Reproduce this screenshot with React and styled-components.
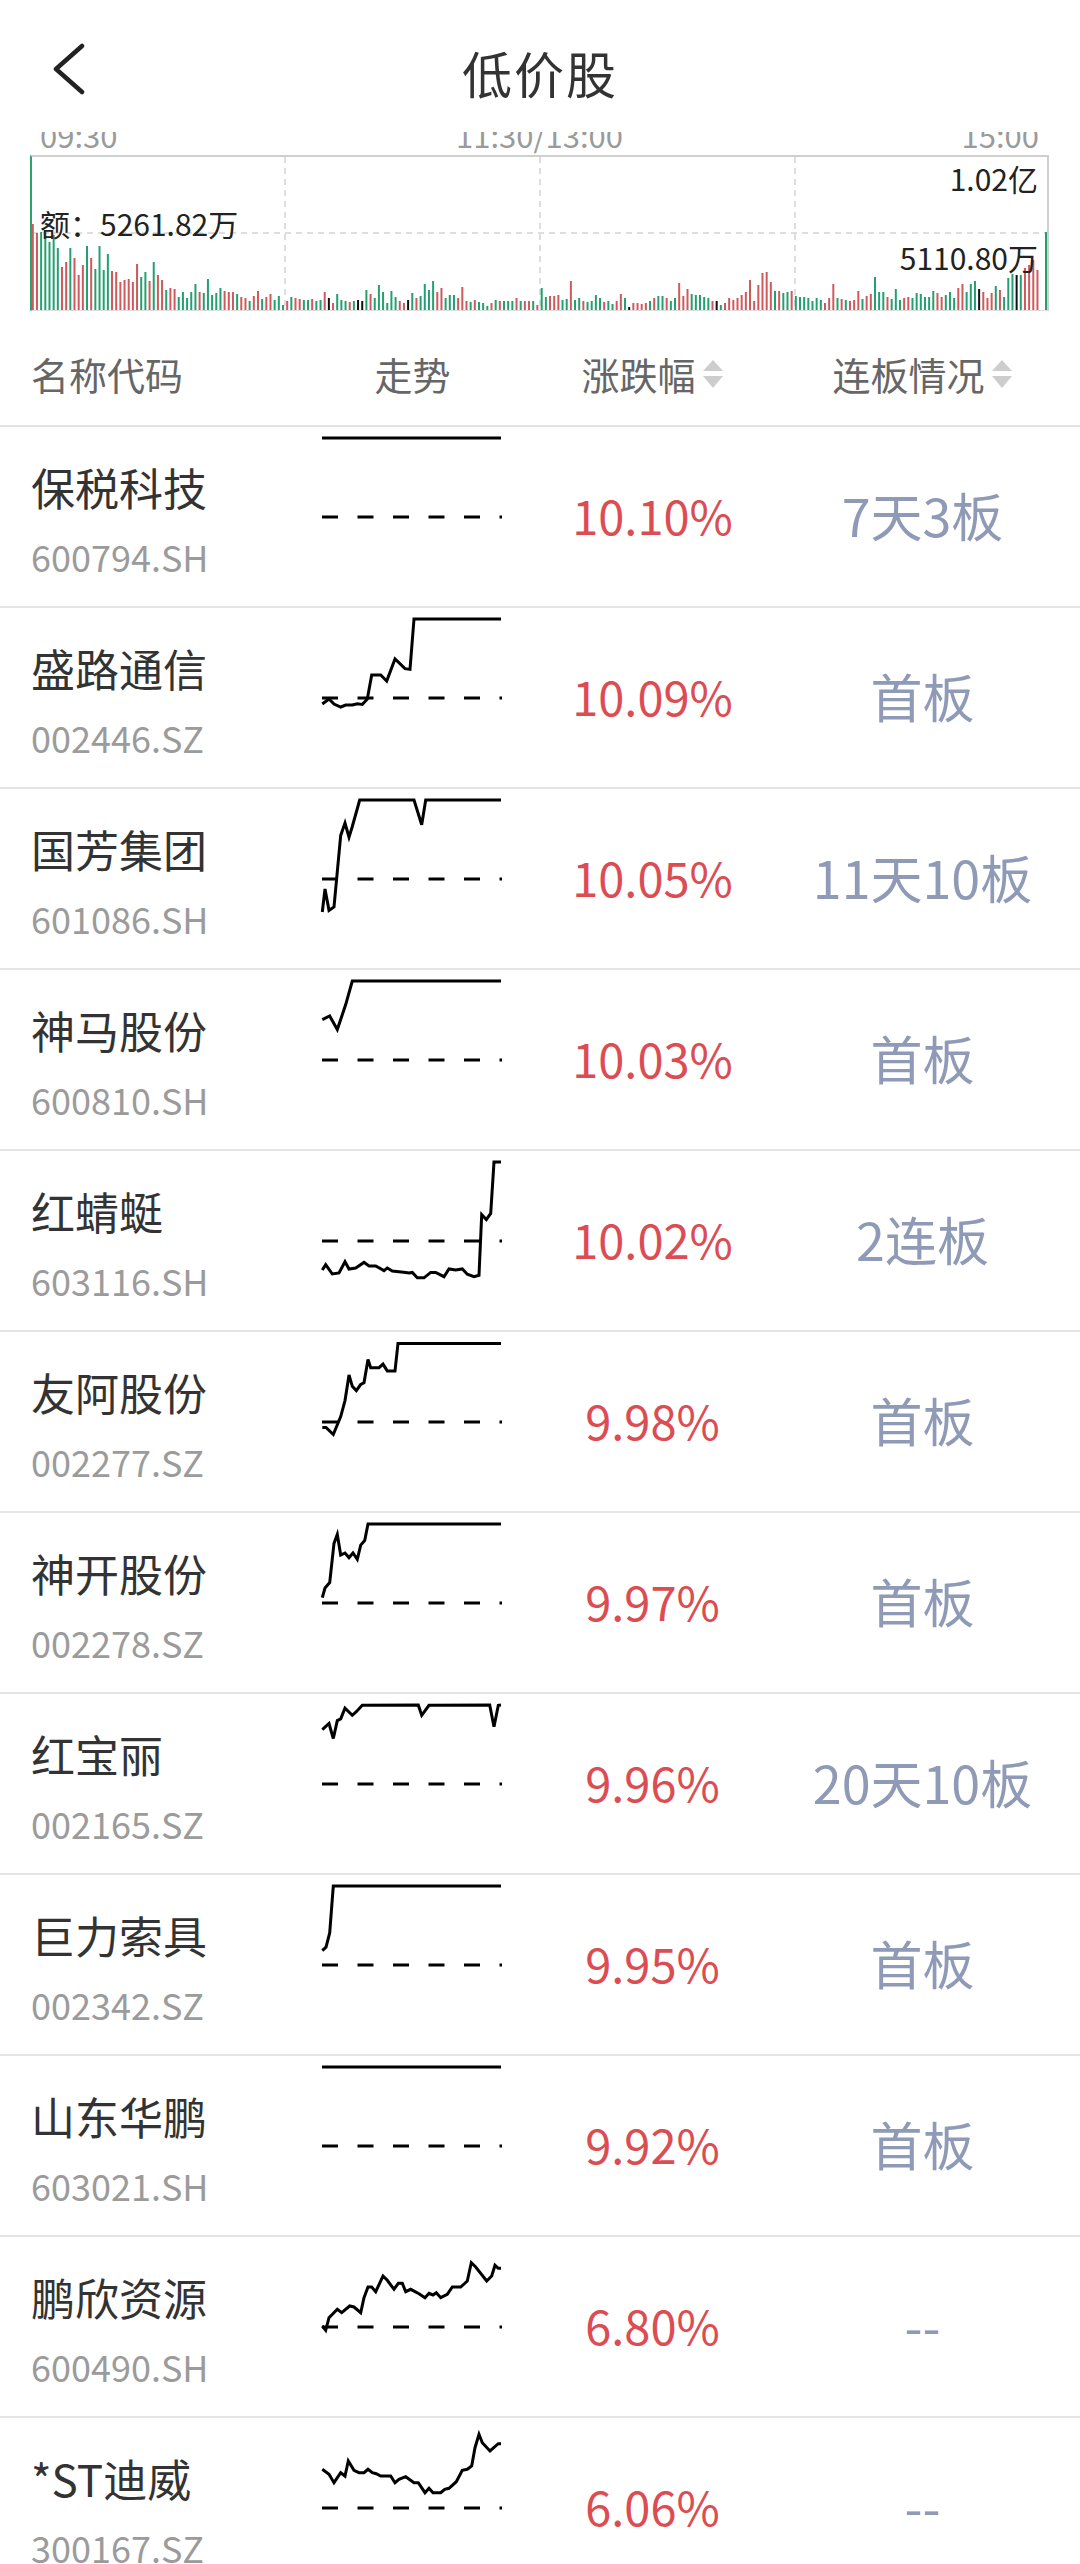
import React from "react";
import styled, { createGlobalStyle } from "styled-components";

const RED = "#db4d53";
const BOARD = "#8e9ab6";
const BAR_RED = "#d0595c";
const BAR_GREEN = "#23a070";

const GlobalStyle = createGlobalStyle`
  html, body { margin: 0; padding: 0; background: #fff; }
  body { font-family: "Noto Sans CJK SC", "Noto Sans", sans-serif; color: #222; }
  * { box-sizing: border-box; }
`;

const Page = styled.div`
  width: 1080px;
  height: 2564px;
  overflow: hidden;
  background: #fff;
`;

const Header = styled.header`
  height: 132px;
  display: grid;
  grid-template-columns: 1fr auto 1fr;
  align-items: start;
  background: #fff;
`;

const BackButton = styled.button`
  justify-self: start;
  margin: 43px 0 0 52px;
  padding: 0;
  border: none;
  background: none;
  width: 34px;
  height: 52px;
  display: flex;
`;

const Title = styled.h1`
  margin: 43px 0 0;
  font-size: 50px;
  line-height: 58px;
  font-weight: 400;
  color: #333;
  letter-spacing: 2px;
`;

const ChartSection = styled.section`
  height: 179px;
  overflow: hidden;
  padding: 0 31px 0 30px;
  display: flex;
  flex-direction: column;
`;

const TimeRow = styled.div`
  height: 23px;
  flex: none;
  display: flex;
  align-items: flex-end;
  justify-content: space-between;
  padding: 0 10px;
`;

const TimeLabel = styled.span`
  font-size: 31px;
  line-height: 31px;
  color: #9a9a9a;
  margin-bottom: 5px;
`;

const Plot = styled.div`
  position: relative;
  height: 156px;
  flex: none;
  border-top: 2px solid #cfcfcf;
  border-left: 2px solid #2aa073;
  border-right: 2px solid #cfcfcf;
  border-bottom: 1px solid #dedede;
`;

const PlotSvg = styled.svg`
  display: block;
  width: 1015px;
  height: 153px;
`;

const PlotLabel = styled.span`
  position: absolute;
  font-size: 30px;
  line-height: 30px;
  color: #222;
  white-space: nowrap;
  ${(p) => (p.$left != null ? `left: ${p.$left}px;` : `right: ${p.$right}px;`)}
  top: ${(p) => p.$top}px;
`;

const cols = "300px 225px 255px 1fr";

const TableHead = styled.div`
  height: 116px;
  display: grid;
  grid-template-columns: ${cols};
  padding: 12px 15px 0 0;
  align-items: center;
  border-bottom: 2px solid #e2e2e2;
`;

const HeadCell = styled.div`
  font-size: 38px;
  line-height: 44px;
  color: #666;
  display: flex;
  align-items: center;
  justify-content: ${(p) => (p.$start ? "flex-start" : "center")};
  padding-left: ${(p) => (p.$start ? "31px" : "0")};
  gap: 6px;
`;

const Row = styled.div`
  height: 181px;
  display: grid;
  grid-template-columns: ${cols};
  padding-right: 15px;
  border-bottom: 2px solid #e4e4e4;
`;

const NameCell = styled.div`
  padding: 34px 0 0 31px;
  display: flex;
  flex-direction: column;
`;

const Name = styled.div`
  font-size: 44px;
  line-height: 52px;
  color: #333;
  white-space: nowrap;
`;

const Code = styled.div`
  margin-top: 23px;
  font-size: 36px;
  line-height: 40px;
  color: #9b9b9b;
`;

const TrendSvg = styled.svg`
  display: block;
  justify-self: center;
  align-self: start;
  margin-top: 10px;
  width: 181px;
  height: 160px;
  overflow: visible;
`;

const Pct = styled.div`
  justify-self: center;
  align-self: center;
  font-size: 47px;
  line-height: 50px;
  color: ${RED};
  padding-bottom: 4px;
`;

const Board = styled.div`
  justify-self: center;
  align-self: center;
  font-size: 52px;
  line-height: 56px;
  color: ${BOARD};
  padding-bottom: 4px;
  white-space: nowrap;
`;

const SortIcon = () => (
  <svg width="22" height="30" viewBox="0 0 22 30">
    <polygon points="1,12 11,1 21,12" fill="#cdcdcd" />
    <polygon points="1,17 11,29 21,17" fill="#cdcdcd" />
  </svg>
);

const BackIcon = () => (
  <svg width="34" height="52" viewBox="0 0 34 52">
    <polyline
      points="30,3 4,26 30,49"
      fill="none"
      stroke="#222"
      strokeWidth="4.5"
      strokeLinecap="round"
      strokeLinejoin="round"
    />
  </svg>
);

const half1 =
  "86r 77r 78g 80g 68g 75g 62g 43r 48r 62g 52r 35r 45r 64g 52r 41g 64g 40g 56g 39r 38r 28r 30r 31r 28r 46r 33g 38g 29r 48g 35r 30r 20g 22r 21r 13g 18g 12g 18g 26g 18r 17g 31g 15g 17g 22g 19r 18r 18r 16g 13r 12r 9g 14r 19r 11g 13r 16r 10g 14g 5g 9r 13g 12r 11r 10g 10g 11r 9g 10g 18r 12k 7r 16g 10g 9g 8r 9g 10k 9k 20g 16r 12g 25g 18g 7g 19g 13g 9r 7r 10k 17g 12r 14g 26g 20g 29g 18r 22r 12g 15g 15g 12r 23r 9r 8g 10r 8g 7g 4g 7r 10g 9r 9g 9g 9g 12r 9g 9r 9r 9g 5r";
const half2 =
  "22g 13g 14r 14r 15r 10g 11g 29r 10g 12g 9r 8g 9g 15g 12g 8r 9g 6g 9r 16r 12g 3k 7r 7r 6r 7r 9g 12r 14g 14g 12r 9g 12g 27r 14r 21r 16g 15g 15g 13g 12g 9r 9k 5g 7r 12r 10r 12r 15r 18r 30r 9r 25r 37r 38r 28r 19g 19r 17g 18g 19r 14g 13g 13g 12g 9g 12g 10g 7r 12r 26r 12g 11r 10g 9r 10r 19r 11g 14r 16r 33g 18g 18g 13r 11g 21g 10g 12r 13r 12g 17g 16g 13g 13g 19g 17r 13r 15g 18g 12g 22r 26r 18g 26g 29g 21k 18r 12r 17r 24g 20r 13g 32g 36g 35k 35g 42r 45r 50r 40r";

const colorOf = (c) => (c === "r" ? BAR_RED : c === "g" ? BAR_GREEN : "#111");

const parse = (s, x0, step) =>
  s.split(" ").map((t, i) => ({
    x: x0 + i * step,
    h: parseInt(t, 10),
    c: colorOf(t.slice(-1)),
  }));

const bars = [
  ...parse(half1, 32.8 - 32, 4.17),
  ...parse(half2, 541.7 - 32, 4.166),
  { x: 1014, h: 78, c: BAR_GREEN },
];

const VolumeChart = () => (
  <Plot>
    <PlotSvg viewBox="0 0 1015 153">
      {[253, 508, 763].map((x) => (
        <line key={x} x1={x} y1="0" x2={x} y2="153" stroke="#d4d4d4" strokeWidth="1.5" strokeDasharray="6 5" />
      ))}
      <line x1="0" y1="76" x2="1015" y2="76" stroke="#d4d4d4" strokeWidth="1.5" strokeDasharray="6 5" />
      {bars.map((b, i) => (
        <rect key={i} x={b.x - 1} y={153 - b.h} width="2" height={b.h} fill={b.c} />
      ))}
    </PlotSvg>
    <PlotLabel $right={9} $top={6}>1.02亿</PlotLabel>
    <PlotLabel $left={8} $top={51}>额：5261.82万</PlotLabel>
    <PlotLabel $right={9} $top={85}>5110.80万</PlotLabel>
  </Plot>
);

const FLAT = [[0, 1], [179, 1]];

const stocks = [
  { name: "保税科技", code: "600794.SH", pct: "10.10%", board: "7天3板", line: FLAT },
  {
    name: "盛路通信", code: "002446.SZ", pct: "10.09%", board: "首板",
    line: [[0.3,86],[7,81],[12,86],[18.7,89],[23.7,87],[30.3,87],[35.3,85.7],[40.3,86.4],[45.3,81],[49.7,57],[58.7,57],[64.7,63],[73,41],[83,50.7],[88,51.4],[92,1],[179,1]],
  },
  {
    name: "国芳集团", code: "601086.SH", pct: "10.05%", board: "11天10板",
    line: [[0.3,113],[3,90],[7,111.4],[12,108],[18.7,36.4],[23,24],[27,38.2],[30.3,27.5],[37.7,1],[92,1],[99.7,25.7],[103.7,1],[179,1]],
  },
  {
    name: "神马股份", code: "600810.SH", pct: "10.03%", board: "首板",
    line: [[0.3,39.6],[7.7,36],[15.3,49.6],[23.7,24.6],[30.3,1],[179,1]],
  },
  {
    name: "红蜻蜓", code: "603116.SH", pct: "10.02%", board: "2连板",
    line: [[0.3,109],[3.7,103.6],[10.3,113],[17,112],[23,100.7],[27,108],[33.7,107],[42,101.4],[47,105],[53.7,105],[62,109.6],[65.3,107],[70.3,110],[77,110.7],[83.7,111.4],[87,112],[90.3,111.4],[95.3,116.8],[102,116.8],[108.7,111.4],[113.7,111.4],[122,115.7],[127,107.9],[133.7,109],[140.3,107.9],[145.3,113.2],[152,115.7],[157,114.3],[159.7,53.6],[164.3,58.6],[168.7,52.5],[172,1],[179,1]],
  },
  {
    name: "友阿股份", code: "002277.SZ", pct: "9.98%", board: "首板",
    line: [[0.3,85.4],[4,85.4],[11.3,92.5],[18.7,74.6],[23,58.6],[27,32.9],[30.3,44.3],[34.3,48.6],[38.7,42.5],[42,40.7],[46,17.5],[48.7,25.7],[57,25.7],[61,22.1],[65.3,28.9],[73,28.9],[76,1.4],[179,1.4]],
  },
  {
    name: "神开股份", code: "002278.SZ", pct: "9.97%", board: "首板",
    line: [[0.3,74.6],[3,65],[7.7,59.6],[12,20.4],[15.3,11.4],[18.7,32.1],[23,30],[27,34.6],[31,30],[35.3,36.4],[38.7,22.1],[42.7,17.5],[46,1],[179,1]],
  },
  {
    name: "红宝丽", code: "002165.SZ", pct: "9.96%", board: "20天10板",
    line: [[0.3,25.6],[7,19.5],[11.3,34.5],[15.3,16.6],[18.7,14.9],[23,4.1],[30.3,11.3],[34.3,7.7],[40.3,1.3],[96.3,1],[99.7,11.3],[107,1.3],[167.7,1],[172,22.7],[176.3,1.3],[179,1]],
  },
  {
    name: "巨力索具", code: "002342.SZ", pct: "9.95%", board: "首板",
    line: [[0.3,65.7],[4,62.1],[7.7,47.9],[11.3,1],[179,1]],
  },
  { name: "山东华鹏", code: "603021.SH", pct: "9.92%", board: "首板", line: FLAT },
  {
    name: "鹏欣资源", code: "600490.SH", pct: "6.80%", board: "--",
    line: [[0.3,79],[3.7,83.3],[7,70.7],[15.3,62.3],[19.7,65.7],[27.7,59],[32,60],[38.7,65.7],[42,50.7],[46,40],[49.7,40],[53.7,44.7],[61,29],[65.3,33.3],[72,42.3],[76.3,36.3],[80.3,36.3],[83.7,44.7],[88.7,42.3],[97,46.7],[103,50.7],[107,46.3],[111,48],[114.3,45.7],[118.7,50.7],[125.3,47.3],[130.3,40],[138.7,40],[145.3,34],[149.3,15.7],[153.7,20],[164.7,34],[169.7,29],[173,18.3],[176.3,21.3],[179,21.3]],
  },
  {
    name: "*ST迪威", code: "300167.SZ", pct: "6.06%", board: "--",
    line: [[0.3,41.3],[7,46.3],[12,54.7],[18.7,44.7],[23,48],[26.3,33],[32,42.3],[37,44.7],[42,44.7],[46,41.3],[50.3,44.7],[54.3,45.7],[58.7,48],[68.7,48],[73,54.7],[77,51.3],[83.7,48.7],[92,54.7],[96.3,54.7],[103,64.7],[107,60.3],[111,64.7],[118.7,64.7],[122.7,61.3],[127,60.3],[134.3,53.7],[140.3,42.3],[145.3,41.3],[149.7,38],[153,19.7],[157,6.3],[160.3,14.7],[168,23],[176.3,15.7],[179,15.7]],
  },
];

const Trend = ({ pts }) => (
  <TrendSvg viewBox="0 0 181 160">
    <line x1="0" y1="80" x2="180" y2="80" stroke="#000" strokeWidth="3" strokeDasharray="16 19.5" />
    <polyline
      points={pts.map((p) => p.join(",")).join(" ")}
      fill="none"
      stroke="#000"
      strokeWidth="3"
      strokeLinejoin="miter"
    />
  </TrendSvg>
);

export default function App() {
  return (
    <Page>
      <GlobalStyle />
      <Header>
        <BackButton aria-label="返回">
          <BackIcon />
        </BackButton>
        <Title>低价股</Title>
        <span />
      </Header>
      <ChartSection>
        <TimeRow>
          <TimeLabel>09:30</TimeLabel>
          <TimeLabel>11:30/13:00</TimeLabel>
          <TimeLabel>15:00</TimeLabel>
        </TimeRow>
        <VolumeChart />
      </ChartSection>
      <TableHead>
        <HeadCell $start>名称代码</HeadCell>
        <HeadCell>走势</HeadCell>
        <HeadCell>
          涨跌幅
          <SortIcon />
        </HeadCell>
        <HeadCell>
          连板情况
          <SortIcon />
        </HeadCell>
      </TableHead>
      {stocks.map((s) => (
        <Row key={s.code}>
          <NameCell>
            <Name>{s.name}</Name>
            <Code>{s.code}</Code>
          </NameCell>
          <Trend pts={s.line} />
          <Pct>{s.pct}</Pct>
          <Board>{s.board}</Board>
        </Row>
      ))}
    </Page>
  );
}
